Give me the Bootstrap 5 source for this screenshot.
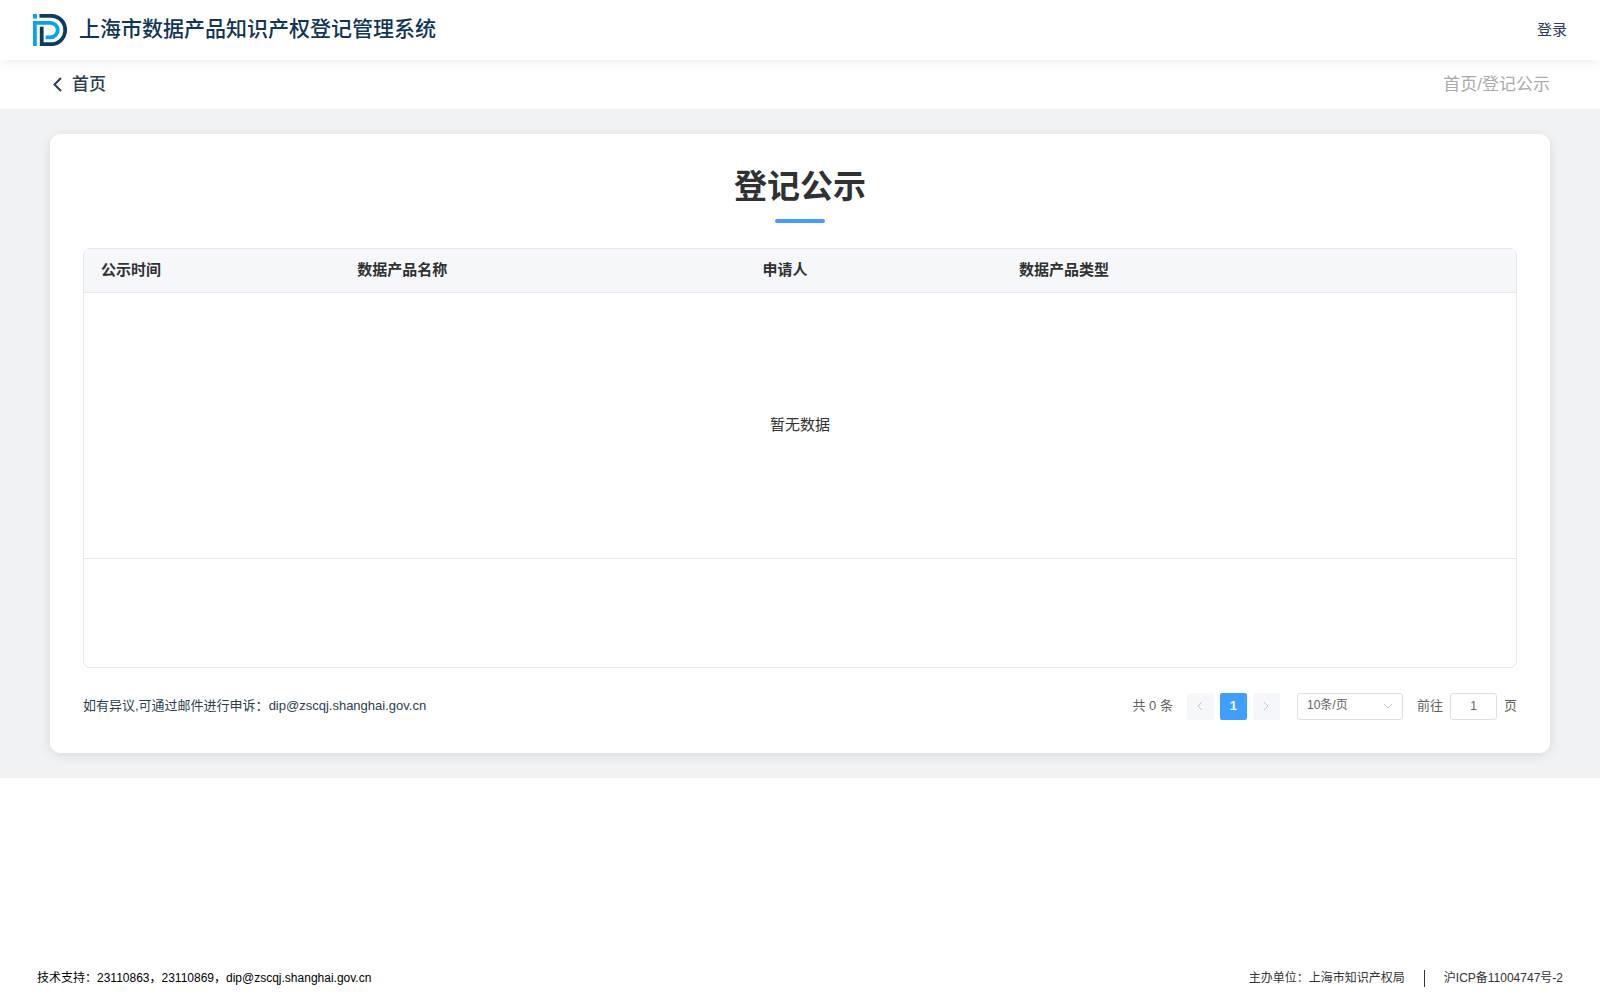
<!DOCTYPE html>
<html lang="zh-CN">
<head>
<meta charset="utf-8">
<meta name="viewport" content="width=device-width, initial-scale=1">
<title>登记公示</title>
<link rel="stylesheet" href="https://cdn.jsdelivr.net/npm/bootstrap@5.3.0/dist/css/bootstrap.min.css">
<style>
  body { font-family: "Liberation Sans", "Noto Sans CJK SC", sans-serif; font-size: 13px; line-height: 20px; color: #2c3e50; }
  a { text-decoration: none; color: inherit; }
  .site-header { height: 60px; padding: 0 33px; box-shadow: 0 2px 12px rgba(0, 0, 0, .07); z-index: 1; }
  .site-logo { width: 34px; height: 32px; }
  .site-title { font-size: 21px; line-height: 28px; font-weight: 500; color: #103556; margin: 0 0 3px; }
  .login-link { font-size: 15px; color: #2b3a5a; }
  .crumb-bar { height: 49px; padding: 0 50px; font-size: 17px; }
  .crumb-bar .crumb-path { color: #aaa; }
  .back-link { font-weight: 500; gap: 9px; }
  .notice-area { background: #f1f2f4; padding: 25px 50px; }
  .notice-card { border-radius: 10px; padding: 33px; box-shadow: 0 2px 12px rgba(0, 0, 0, .1); }
  .notice-heading { font-size: 33px; line-height: 40px; font-weight: 700; color: #303133; margin: 0; }
  .heading-rule { width: 50px; height: 4px; border-radius: 2px; background: #409eff; margin: 12px auto 25px; }
  .table-frame { border: 1px solid #e4e7ed; border-radius: 7px; overflow: hidden; padding-bottom: 108px; }
  .notice-table { table-layout: fixed; margin: 0; }
  .notice-table > :not(caption) > * > * { padding: 0 17px; border-color: #e4e7ed; color: #303133; font-size: 15px; vertical-align: middle; }
  .notice-table th { height: 43px; background: #f5f7fa; font-weight: 700; }
  .notice-table td { height: 266px; }
  .card-foot { margin-top: 25px; }
  .pager { color: #606266; }
  .pager .page-total { margin-right: 14px; }
  .pager .page-steps { gap: 6px; margin-right: 17px; }
  .pager .page-btn { width: 27px; height: 27px; border: 0; border-radius: 2px; background: #f5f7fa; color: #c0c4cc; padding: 0; }
  .pager .page-btn svg { display: block; margin: 0 auto; }
  .pager .page-btn.current { background: #409eff; color: #fff; font-weight: 700; }
  .pager .size-select { display: block; width: 106px; height: 27px; border: 1px solid #dcdfe6; border-radius: 3px; background: #fff; appearance: none; padding: 0 24px 2px 9px; font-size: 12px; color: #606266; }
  .select-wrap svg { right: 10px; top: 9px; pointer-events: none; }
  .pager .page-jump { gap: 7px; margin-left: 14px; }
  .pager .page-input { width: 47px; height: 27px; border: 1px solid #dcdfe6; border-radius: 3px; font-size: 12px; color: #606266; text-align: center; padding: 0; }
  .site-footer { padding: 0 37px 12px; font-size: 12px; color: #333; }
  .site-footer .support { color: #000; }
  .foot-rule { width: 1px; height: 17px; background: #333; margin: 0 19px; }
</style>
</head>
<body class="d-flex flex-column min-vh-100 bg-white">
<header class="site-header bg-white d-flex align-items-center justify-content-between position-relative">
  <div class="d-flex align-items-center gap-2">
    <svg class="site-logo me-1" viewBox="0 0 34 32" fill="none" stroke-width="3.8" aria-hidden="true">
      <path d="M0 2.3h4" stroke="#06a4ec" stroke-width="4.6"/>
      <path d="M1.9 32V8.9H17.5a7.2 7.2 0 0 1 0 14.4H12.6" stroke="#06a4ec"/>
      <path d="M6.4 1.8H18a14.2 14.2 0 0 1 0 28.4H8.7V12.8" stroke="#103b60"/>
    </svg>
    <h1 class="site-title">上海市数据产品知识产权登记管理系统</h1>
  </div>
  <a class="login-link" href="#">登录</a>
</header>
<nav class="crumb-bar d-flex align-items-center justify-content-between">
  <a class="back-link d-flex align-items-center" href="#">
    <svg width="13" height="16" viewBox="0 0 13 16" fill="none" stroke="#2c3e50" stroke-width="2" aria-hidden="true"><path d="M11 1L4.5 7.5L11 14"/></svg>
    首页
  </a>
  <span class="crumb-path">首页/登记公示</span>
</nav>
<main class="notice-area">
  <section class="notice-card bg-white">
    <h2 class="notice-heading text-center">登记公示</h2>
    <div class="heading-rule"></div>
    <div class="table-frame">
      <table class="table notice-table">
        <colgroup><col style="width:17.9%"><col style="width:28.3%"><col style="width:17.9%"><col></colgroup>
        <thead><tr><th scope="col">公示时间</th><th scope="col">数据产品名称</th><th scope="col">申请人</th><th scope="col">数据产品类型</th></tr></thead>
        <tbody><tr><td colspan="4" class="text-center">暂无数据</td></tr></tbody>
      </table>
    </div>
    <div class="card-foot d-flex align-items-center justify-content-between">
      <div>如有异议,可通过邮件进行申诉：<a href="mailto:dip@zscqj.shanghai.gov.cn">dip@zscqj.shanghai.gov.cn</a></div>
      <div class="pager d-flex align-items-center">
        <span class="page-total">共 0 条</span>
        <div class="page-steps d-flex">
          <button class="page-btn" type="button" disabled aria-label="上一页"><svg width="8" height="10" viewBox="0 0 8 10" fill="none" stroke="currentColor"><path d="M6 1L2 5L6 9"/></svg></button>
          <button class="page-btn current" type="button">1</button>
          <button class="page-btn" type="button" disabled aria-label="下一页"><svg width="8" height="10" viewBox="0 0 8 10" fill="none" stroke="currentColor"><path d="M2 1L6 5L2 9"/></svg></button>
        </div>
        <div class="select-wrap position-relative">
          <select class="size-select" aria-label="每页条数"><option>10条/页</option></select>
          <svg class="position-absolute" width="10" height="8" viewBox="0 0 10 8" fill="none" stroke="#c0c4cc" aria-hidden="true"><path d="M1 2L5 6L9 2"/></svg>
        </div>
        <label class="page-jump d-flex align-items-center">前往 <input class="page-input" type="text" value="1"> 页</label>
      </div>
    </div>
  </section>
</main>
<footer class="site-footer mt-auto d-flex align-items-center justify-content-between">
  <div class="support">技术支持：23110863，23110869，dip@zscqj.shanghai.gov.cn</div>
  <div class="d-flex align-items-center">
    <span>主办单位：上海市知识产权局</span>
    <span class="foot-rule"></span>
    <a href="#">沪ICP备11004747号-2</a>
  </div>
</footer>
<script src="https://cdn.jsdelivr.net/npm/bootstrap@5.3.0/dist/js/bootstrap.bundle.min.js"></script>
</body>
</html>
